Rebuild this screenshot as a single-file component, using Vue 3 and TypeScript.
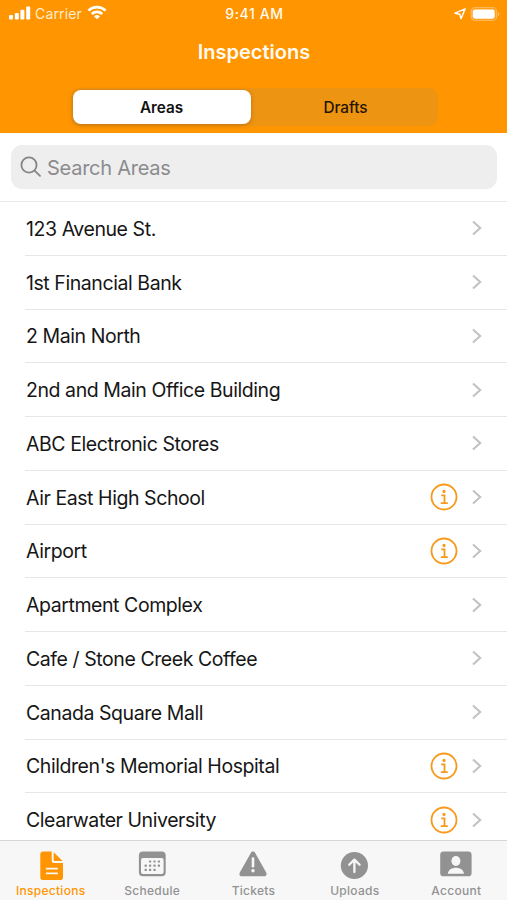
<script setup lang="ts">
import { ref } from 'vue'

interface Area {
  name: string
  info?: boolean
}

const areas: Area[] = [
  { name: '123 Avenue St.' },
  { name: '1st Financial Bank' },
  { name: '2 Main North' },
  { name: '2nd and Main Office Building' },
  { name: 'ABC Electronic Stores' },
  { name: 'Air East High School', info: true },
  { name: 'Airport', info: true },
  { name: 'Apartment Complex' },
  { name: 'Cafe / Stone Creek Coffee' },
  { name: 'Canada Square Mall' },
  { name: "Children's Memorial Hospital", info: true },
  { name: 'Clearwater University', info: true },
]

const segments = ['Areas', 'Drafts']
const activeSegment = ref('Areas')

const tabs = ['Inspections', 'Schedule', 'Tickets', 'Uploads', 'Account']
const activeTab = ref('Inspections')

// Calendar day dots as [column, row]
const days: [number, number][] = [
  [1, 0], [2, 0], [3, 0],
  [0, 1], [1, 1], [2, 1], [3, 1],
  [0, 2], [1, 2], [2, 2],
]
</script>

<template>
  <div class="screen">
    <header class="header">
      <div class="status">
        <div class="status-side">
          <svg class="signal" width="22" height="14" viewBox="0 0 22 14" fill="#fff">
            <rect x="0" y="9" width="4" height="4.6" rx="1" />
            <rect x="5.8" y="7" width="4" height="6.6" rx="1" />
            <rect x="11.4" y="3.8" width="4" height="9.8" rx="1" />
            <rect x="17.2" y="0.4" width="4" height="13.2" rx="1" />
          </svg>
          <span class="carrier">Carrier</span>
          <svg class="wifi" width="20" height="15" viewBox="0 0 20 15" fill="none" stroke="#fff" stroke-width="2.6">
            <path d="M1.4 5.6a12.4 12.4 0 0 1 17.2 0" />
            <path d="M4.7 9a7.7 7.7 0 0 1 10.6 0" />
            <path d="M10 14.3 7 11.4a4.4 4.4 0 0 1 6 0z" fill="#fff" stroke="none" />
          </svg>
        </div>
        <span class="time">9:41 AM</span>
        <div class="status-side right">
          <svg width="12" height="12" viewBox="0 0 12 12" fill="none" stroke="#fff" stroke-width="1.4" stroke-linejoin="round">
            <path d="M11.2.9 7 10.6 5.800 6.300 1 5.200z" />
          </svg>
          <svg class="battery" width="30" height="16" viewBox="0 0 30 16">
            <rect x="1" y="1.5" width="25.6" height="13" rx="4" fill="#fff" fill-opacity=".12" stroke="#fff" stroke-opacity=".3" stroke-width="1.2" />
            <rect x="2.7" y="3.4" width="22" height="9.3" rx="2.4" fill="#fff" />
            <path d="M28 6v4.4a2.4 2.4 0 0 0 0-4.4z" fill="#fff" fill-opacity=".4" />
          </svg>
        </div>
      </div>
      <h1 class="title">Inspections</h1>
      <div class="segmented">
        <button
          v-for="segment in segments"
          :key="segment"
          class="segment"
          :class="{ active: segment === activeSegment }"
          @click="activeSegment = segment"
        >{{ segment }}</button>
      </div>
    </header>

    <div class="search-wrap">
      <div class="search">
        <svg width="22" height="22" viewBox="0 0 22 22" fill="none" stroke="#858587" stroke-width="1.8" stroke-linecap="round">
          <circle cx="9" cy="9" r="7.6" />
          <path d="m14.6 14.6 5.4 5.3" />
        </svg>
        <span class="placeholder">Search Areas</span>
      </div>
    </div>

    <ul class="list">
      <li v-for="area in areas" :key="area.name" class="row">
        <span class="name">{{ area.name }}</span>
        <svg v-if="area.info" class="info" width="28" height="28" viewBox="0 0 28 28" fill="none" stroke="#f79a1c">
          <circle cx="14" cy="14" r="12.5" stroke-width="1.8" />
          <circle cx="14" cy="8.4" r="1.6" fill="#f79a1c" stroke="none" />
          <path d="M11.2 12.3h3.3v7.6M10.8 20.1h7" stroke-width="1.8" />
        </svg>
        <svg class="chevron" width="12" height="16" viewBox="0 0 12 16" fill="none" stroke="#c2c2c5" stroke-width="2.1">
          <path d="m2 1.4 7.2 6.6L2 14.6" />
        </svg>
      </li>
    </ul>

    <nav class="tabs">
      <button
        v-for="tab in tabs"
        :key="tab"
        class="tab"
        :class="{ active: tab === activeTab }"
        @click="activeTab = tab"
      >
        <svg width="36" height="32" viewBox="0 0 36 32" fill="currentColor">
          <template v-if="tab === 'Inspections'">
            <path d="M10.4 2.5h8.3v9.2a2.4 2.4 0 0 0 2.4 2.4H30v14.1a2.8 2.8 0 0 1-2.8 2.8H10.1a2.8 2.8 0 0 1-2.8-2.8V5.4a2.9 2.9 0 0 1 3.1-2.9z" />
            <path d="M20.7 3.2v7.6c0 .8.5 1.3 1.3 1.3h7.5z" />
            <path d="M13.6 19.6h10.6M13.6 24.4h10.6" stroke="#f7f7f7" stroke-width="1.7" stroke-linecap="round" />
          </template>
          <template v-else-if="tab === 'Schedule'">
            <rect x="4.9" y="2.5" width="26.8" height="24.8" rx="4" />
            <rect x="7" y="9" width="22.6" height="16.1" rx="2" fill="#f7f7f7" />
            <rect v-for="[c, r] in days" :key="`${c}-${r}`" :x="10.6 + c * 4.4" :y="11.4 + r * 4.2" width="2.2" height="2.2" rx=".6" />
          </template>
          <template v-else-if="tab === 'Tickets'">
            <path d="M15.8 3.9c1-1.8 3.4-1.8 4.4 0l11 19.7c1 1.8-.1 3.7-2.2 3.7H7c-2.1 0-3.2-1.9-2.2-3.7z" />
            <path d="M18 9.6v7.7" stroke="#f7f7f7" stroke-width="2.6" stroke-linecap="round" />
            <circle cx="18" cy="21.8" r="1.7" fill="#f7f7f7" />
          </template>
          <template v-else-if="tab === 'Uploads'">
            <circle cx="17.4" cy="16.5" r="13.6" />
            <path d="M17.4 23V11.2M12.2 15.8l5.2-5.2 5.2 5.2" fill="none" stroke="#f7f7f7" stroke-width="2.3" stroke-linecap="round" stroke-linejoin="round" />
          </template>
          <template v-else>
            <rect x="2.2" y="2.5" width="31.4" height="24.8" rx="3.4" />
            <ellipse cx="17.9" cy="12" rx="4.5" ry="5" fill="#f7f7f7" />
            <path d="M9.8 24.8c.5-4 4-6 8.1-6s7.6 2 8.1 6z" fill="#f7f7f7" />
          </template>
        </svg>
        <span class="tab-label">{{ tab }}</span>
      </button>
    </nav>
  </div>
</template>

<style>
body {
  margin: 0;
  overflow: hidden;
}
</style>

<style scoped>
.screen {
  display: flex;
  flex-direction: column;
  width: 507px;
  height: 900px;
  overflow: hidden;
  background: #fff;
  color: #161616;
  font-family: Inter, 'Liberation Sans', sans-serif;
}

button {
  border: 0;
  padding: 0;
  margin: 0;
  background: none;
  font: inherit;
  color: inherit;
}

.header {
  flex: none;
  box-sizing: border-box;
  height: 133px;
  background: #ff9500;
  color: #fffaf0;
  display: flex;
  flex-direction: column;
  align-items: center;
}

.status {
  box-sizing: border-box;
  width: 100%;
  height: 27px;
  padding: 0 7px 0 9px;
  display: grid;
  grid-template-columns: 1fr auto 1fr;
  align-items: center;
}

.status-side {
  display: flex;
  align-items: center;
}

.right {
  justify-content: flex-end;
  gap: 4px;
}

.signal {
  margin-top: -1px;
}

.carrier {
  margin: 0 5px 0 4px;
  font-size: 14px;
  letter-spacing: 0.15px;
  color: #ffedcf;
}

.wifi {
  margin-top: -2px;
}

.time {
  font-size: 14px;
  font-weight: 500;
  letter-spacing: 0.6px;
}

.title {
  margin: 12px 0 0 1px;
  font-size: 20px;
  font-weight: 600;
  line-height: 26px;
}

.segmented {
  box-sizing: border-box;
  display: grid;
  grid-template-columns: 178px 1fr;
  width: 367px;
  height: 38px;
  margin: 23px 0 0 1px;
  padding: 2px;
  gap: 5px;
  border-radius: 9px;
  background: #ee9413;
}

.segment {
  border-radius: 8px;
  font-size: 15.3px;
  font-weight: 500;
  color: #241503;
}

.segment.active {
  background: #fff;
  color: #111;
  font-weight: 600;
  box-shadow: 0 1px 4px rgba(90, 50, 0, 0.35);
}

.search-wrap {
  flex: none;
  box-sizing: border-box;
  height: 69px;
  padding: 12px 10px 0 11px;
  border-bottom: 1px solid #e9e9e9;
}

.search {
  display: flex;
  align-items: center;
  gap: 5px;
  height: 44px;
  padding-left: 9px;
  border-radius: 11px;
  background: #eeeeef;
}

.placeholder {
  padding-top: 1px;
  font-size: 20px;
  letter-spacing: -0.25px;
  color: #8b8b8e;
}

.list {
  flex: 1;
  min-height: 0;
  margin: 0;
  padding: 0;
  overflow: hidden;
  list-style: none;
}

.row {
  box-sizing: border-box;
  display: flex;
  align-items: center;
  height: 53.75px;
  margin-left: 25px;
  padding-right: 24px;
  border-bottom: 1px solid #e6e6e6;
}

.name {
  flex: 1;
  padding: 1px 0 0 1px;
  font-size: 19.5px;
  letter-spacing: -0.43px;
}

.info {
  margin-right: 13px;
}

.tabs {
  flex: none;
  box-sizing: border-box;
  height: 60px;
  display: grid;
  grid-template-columns: repeat(5, 1fr);
  border-top: 1px solid #d6d6d6;
  background: #f7f7f7;
}

.tab {
  display: flex;
  flex-direction: column;
  align-items: center;
  padding-top: 8px;
  color: #929292;
}

.tab.active {
  color: #ff9500;
}

.tab-label {
  margin-top: 2px;
  font-size: 12px;
  font-weight: 500;
  line-height: 16px;
  letter-spacing: 0.28px;
}
</style>
